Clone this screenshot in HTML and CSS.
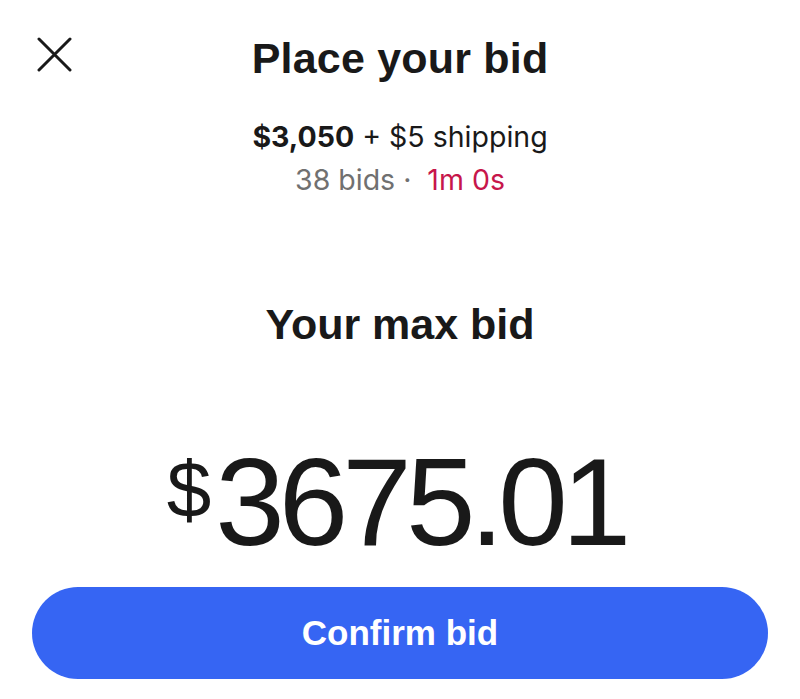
FILE: index.html
```html
<!DOCTYPE html>
<html>
<head>
    <meta charset="UTF-8">
    <meta name="viewport" content="width=device-width, initial-scale=1.0">
    <title>Place your bid</title>
    <link rel="stylesheet" href="styles.css">
</head>
<body>
    <div class="sheet">
        <header class="sheet-header">
            <button class="close" aria-label="Close">
                <svg width="35" height="35" viewBox="0 0 35 35">
                    <path d="M2 2 L33 33 M33 2 L2 33" stroke="#191919" stroke-width="3" stroke-linecap="round" fill="none"/>
                </svg>
            </button>
            <h1 class="title">Place your bid</h1>
        </header>

        <div class="summary">
            <p class="price"><strong>$3,050</strong> + $5 shipping</p>
            <p class="meta"><span class="bids">38 bids ·</span><span class="time">1m 0s</span></p>
        </div>

        <h2 class="subtitle">Your max bid</h2>

        <div class="amount">
            <span class="currency">$</span>
            <span class="digits">3675.01</span>
        </div>

        <button class="confirm">Confirm bid</button>
    </div>
</body>
</html>
```

FILE: styles.css
```css
body {
    margin: 0;
    background: #fff;
    color: #191919;
    font-family: 'Liberation Sans', Arial, sans-serif;
}
.sheet {
    display: flex;
    flex-direction: column;
    padding: 0 32px;
}
.sheet-header {
    display: grid;
    grid-template-columns: 1fr auto 1fr;
    align-items: start;
    margin: 0 -32px;
    padding-top: 32px;
}
.close {
    justify-self: start;
    margin: 5px 0 0 37px;
    padding: 0;
    border: none;
    background: none;
    width: 35px;
    height: 35px;
}
.close svg {
    display: block;
}
.title {
    margin: 0;
    font-size: 43px;
    line-height: 52px;
    font-weight: bold;
    text-align: center;
    letter-spacing: 0.2px;
}
.summary {
    margin-top: 31px;
    text-align: center;
    font-family: Inter, 'Liberation Sans', sans-serif;
    font-size: 28.5px;
    line-height: 43px;
}
.summary p {
    margin: 0;
}
.price strong {
    font-weight: 700;
}
.bids {
    color: #707070;
}
.time {
    color: #c7164b;
    margin-left: 16px;
}
.subtitle {
    margin: 97px 0 0;
    font-size: 43px;
    line-height: 52px;
    font-weight: bold;
    text-align: center;
}
.amount {
    margin-top: 87px;
    padding-right: 8px;
    display: flex;
    justify-content: center;
    align-items: flex-start;
}
.currency {
    font-size: 80px;
    line-height: 80px;
    margin-top: 13px;
    margin-right: 4px;
}
.digits {
    font-size: 125px;
    line-height: 130px;
    letter-spacing: -6px;
}
.confirm {
    margin-top: 20px;
    height: 92px;
    border: none;
    border-radius: 46px;
    background: #3665f3;
    color: #fff;
    font-family: 'Liberation Sans', Arial, sans-serif;
    font-size: 35px;
    font-weight: bold;
}
```
